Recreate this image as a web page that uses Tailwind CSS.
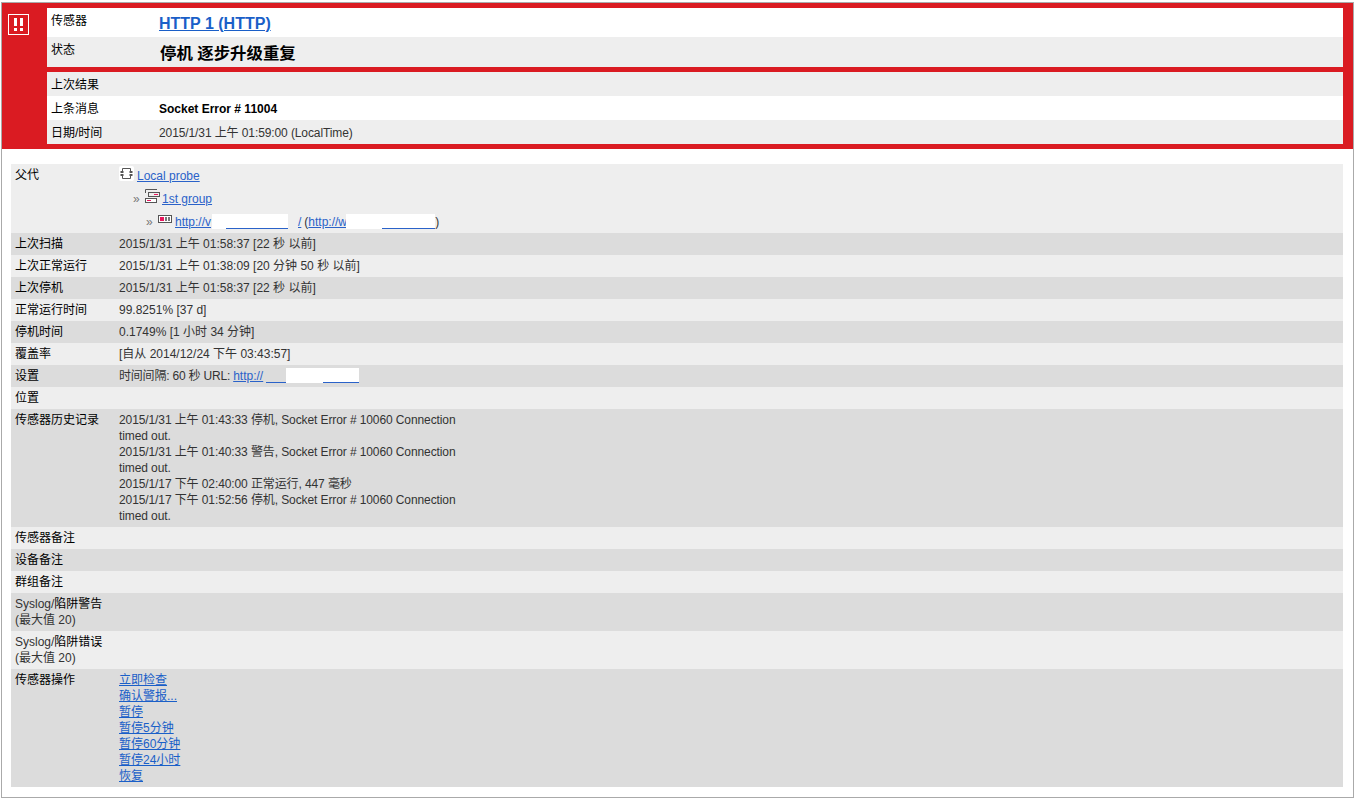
<!DOCTYPE html>
<html lang="zh">
<head>
    <meta charset="UTF-8">
    <title>HTTP 1 (HTTP)</title>
    <script src="https://cdn.jsdelivr.net/npm/@tailwindcss/browser@4"></script>
</head>
<body class="bg-white h-[801px] overflow-hidden font-['Liberation_Sans','Noto_Sans_CJK_SC',sans-serif] text-[12px] leading-4 text-[#333]">
    <div class="ml-[1px] mr-[2px] mt-[2px] h-[796px] border border-[#aaa] bg-white">
        <!-- Red header -->
        <div class="flex bg-[#da1b22] pt-[5px] pb-[5px] pr-[10px] h-[146px]">
            <div class="w-[45px] shrink-0 pl-[6px] pt-[5px]">
                <svg width="22" height="22" viewBox="0 0 22 22">
                    <rect x="0.5" y="1.5" width="20" height="20" fill="none" stroke="#fff" stroke-width="1"/>
                    <rect x="6" y="5" width="3" height="8" fill="#fff"/>
                    <rect x="12" y="5" width="3" height="8" fill="#fff"/>
                    <rect x="6" y="15" width="3" height="3" fill="#fff"/>
                    <rect x="12" y="15" width="3" height="3" fill="#fff"/>
                </svg>
            </div>
            <div class="flex-1 flex flex-col">
                <div class="flex bg-white h-[29px]">
                    <div class="w-[112px] pl-[4px] pt-[5px] text-black">传感器</div>
                    <a href="#" class="self-start mt-[7px] text-[16px] font-bold leading-[18px] text-[#1a5fc8] underline">HTTP 1 (HTTP)</a>
                </div>
                <div class="flex bg-[#eeeeee] h-[30px]">
                    <div class="w-[112px] pl-[4px] pt-[5px] text-black">状态</div>
                    <div class="ml-[1px] mt-[6px] text-[16.4px] font-bold leading-5 text-black">停机 逐步升级重复</div>
                </div>
                <div class="h-[5px]"></div>
                <div class="flex bg-[#eeeeee] h-[24px]">
                    <div class="w-[112px] pl-[4px] pt-[5px] text-black">上次结果</div>
                </div>
                <div class="flex bg-white h-[24px]">
                    <div class="w-[112px] pl-[4px] pt-[5px] text-black">上条消息</div>
                    <div class="pt-[5px] font-bold text-black">Socket Error # 11004</div>
                </div>
                <div class="flex bg-[#eeeeee] h-[24px]">
                    <div class="w-[112px] pl-[4px] pt-[5px] text-black">日期/时间</div>
                    <div class="pt-[5px] tracking-[-0.1px]">2015/1/31 上午 01:59:00 (LocalTime)</div>
                </div>
            </div>
        </div>

        <!-- Detail rows -->
        <div class="mt-[15px] mx-[9px] w-[1332px]">
            <div class="flex bg-[#eeeeee] h-[69px] pt-[3px] pl-[4px]">
                <div class="w-[104px] text-black">父代</div>
                <div class="flex flex-col">
                    <div class="flex items-start h-[23px]">
                        <svg class="-mt-[1px] mr-[3px]" width="15" height="15" viewBox="0 0 15 15" fill="none">
                            <rect x="0" y="0" width="15" height="15" rx="2" fill="#fff"/>
                            <path d="M3.5 2.5H11.5V5M11.5 9V12.5H3.5V9M3.5 5V2.5" stroke="#555"/>
                            <rect x="1.5" y="5" width="3" height="2" fill="#555"/>
                            <rect x="10.5" y="5" width="3" height="2" fill="#555"/>
                            <rect x="1.5" y="8" width="3" height="2" fill="#555"/>
                            <rect x="10.5" y="8" width="3" height="2" fill="#555"/>
                        </svg>
                        <a href="#" class="mt-[1px] text-[#2a62c9] underline">Local probe</a>
                    </div>
                    <div class="flex items-start h-[23px] pl-[14px]">
                        <span class="w-[12px] mt-[1px] text-[#777]">»</span>
                        <svg class="-mt-[1px] mr-[2px]" width="15" height="15" viewBox="0 0 15 15" fill="none">
                            <path d="M0.5 4V0.5H12" stroke="#555"/>
                            <rect x="3.5" y="3.5" width="11" height="4" stroke="#555"/>
                            <rect x="9" y="5" width="4" height="1" fill="#e8175d"/>
                            <rect x="0.5" y="9.5" width="11" height="4" stroke="#555" fill="#fff"/>
                            <rect x="2" y="11" width="4" height="1" fill="#e8175d"/>
                        </svg>
                        <a href="#" class="mt-[1px] text-[#2a62c9] underline">1st group</a>
                    </div>
                    <div class="flex items-start pl-[27px]">
                        <span class="w-[12px] mt-[1px] text-[#777]">»</span>
                        <svg class="mt-[2px] mr-[3px]" width="14" height="15" viewBox="0 0 14 15" fill="none">
                            <rect x="0.5" y="0.5" width="13" height="7" stroke="#555" fill="#fff"/>
                            <rect x="2" y="2" width="4" height="4" fill="#e8175d"/>
                            <rect x="7" y="2" width="2" height="4" fill="#777"/>
                            <rect x="10" y="2" width="2" height="4" fill="#777"/>
                        </svg>
                        <div class="mt-[1px] flex items-start">
                            <a href="#" class="w-[37px] text-[#2a62c9] underline">http://v</a>
                            <span class="w-[14px] h-[15px] bg-white"></span>
                            <span class="w-[62px] h-[15px] bg-white border-b border-[#2a62c9]"></span>
                            <span class="w-[10px] h-[15px]"></span>
                            <a href="#" class="text-[#2a62c9] underline">/</a>
                            <span class="ml-[3px]">(</span>
                            <a href="#" class="w-[38px] text-[#2a62c9] underline">http://w</a>
                            <span class="w-[36px] h-[15px] bg-white"></span>
                            <span class="w-[53px] h-[15px] bg-white border-b border-[#2a62c9]"></span>
                            <span>)</span>
                        </div>
                    </div>
                </div>
            </div>
            <div class="flex bg-[#dcdcdc] h-[22px] pt-[3px] pl-[4px]"><div class="w-[104px] text-black">上次扫描</div><div>2015/1/31 上午 01:58:37 [22 秒 以前]</div></div>
            <div class="flex bg-[#eeeeee] h-[22px] pt-[3px] pl-[4px]"><div class="w-[104px] text-black">上次正常运行</div><div>2015/1/31 上午 01:38:09 [20 分钟 50 秒 以前]</div></div>
            <div class="flex bg-[#dcdcdc] h-[22px] pt-[3px] pl-[4px]"><div class="w-[104px] text-black">上次停机</div><div>2015/1/31 上午 01:58:37 [22 秒 以前]</div></div>
            <div class="flex bg-[#eeeeee] h-[22px] pt-[3px] pl-[4px]"><div class="w-[104px] text-black">正常运行时间</div><div>99.8251% [37 d]</div></div>
            <div class="flex bg-[#dcdcdc] h-[22px] pt-[3px] pl-[4px]"><div class="w-[104px] text-black">停机时间</div><div>0.1749% [1 小时 34 分钟]</div></div>
            <div class="flex bg-[#eeeeee] h-[22px] pt-[3px] pl-[4px]"><div class="w-[104px] text-black">覆盖率</div><div>[自从 2014/12/24 下午 03:43:57]</div></div>
            <div class="flex bg-[#dcdcdc] h-[22px] pt-[3px] pl-[4px]">
                <div class="w-[104px] text-black">设置</div>
                <div class="flex items-start whitespace-pre">
                    <span class="tracking-[-0.2px]">时间间隔: 60 秒 URL: </span>
                    <a href="#" class="w-[33px] text-[#2a62c9] underline">http://</a>
                    <span class="w-[20px] h-[15px] border-b border-[#2a62c9]"></span>
                    <span class="w-[37px] h-[15px] bg-white"></span>
                    <span class="w-[36px] h-[15px] bg-white border-b border-[#2a62c9]"></span>
                </div>
            </div>
            <div class="flex bg-[#eeeeee] h-[22px] pt-[3px] pl-[4px]"><div class="w-[104px] text-black">位置</div></div>
            <div class="flex bg-[#dcdcdc] h-[118px] pt-[3px] pl-[4px]">
                <div class="w-[104px] text-black">传感器历史记录</div>
                <div class="w-[345px] tracking-[-0.1px]">
                    2015/1/31 上午 01:43:33 停机, Socket Error # 10060 Connection timed out.<br>
                    2015/1/31 上午 01:40:33 警告, Socket Error # 10060 Connection timed out.<br>
                    2015/1/17 下午 02:40:00 正常运行, 447 毫秒<br>
                    2015/1/17 下午 01:52:56 停机, Socket Error # 10060 Connection timed out.
                </div>
            </div>
            <div class="flex bg-[#eeeeee] h-[22px] pt-[3px] pl-[4px]"><div class="w-[104px] text-black">传感器备注</div></div>
            <div class="flex bg-[#dcdcdc] h-[22px] pt-[3px] pl-[4px]"><div class="w-[104px] text-black">设备备注</div></div>
            <div class="flex bg-[#eeeeee] h-[22px] pt-[3px] pl-[4px]"><div class="w-[104px] text-black">群组备注</div></div>
            <div class="flex bg-[#dcdcdc] h-[38px] pt-[3px] pl-[4px]"><div class="w-[104px]">Syslog/<span class="text-black">陷阱警告</span><br>(最大值 20)</div></div>
            <div class="flex bg-[#eeeeee] h-[38px] pt-[3px] pl-[4px]"><div class="w-[104px]">Syslog/<span class="text-black">陷阱错误</span><br>(最大值 20)</div></div>
            <div class="flex bg-[#dcdcdc] h-[118px] pt-[3px] pl-[4px]">
                <div class="w-[104px] text-black">传感器操作</div>
                <div class="flex flex-col items-start text-[#1a5fc8]">
                    <a href="#" class="underline">立即检查</a>
                    <a href="#" class="underline">确认警报...</a>
                    <a href="#" class="underline">暂停</a>
                    <a href="#" class="underline">暂停5分钟</a>
                    <a href="#" class="underline">暂停60分钟</a>
                    <a href="#" class="underline">暂停24小时</a>
                    <a href="#" class="underline">恢复</a>
                </div>
            </div>
        </div>
    </div>
</body>
</html>
